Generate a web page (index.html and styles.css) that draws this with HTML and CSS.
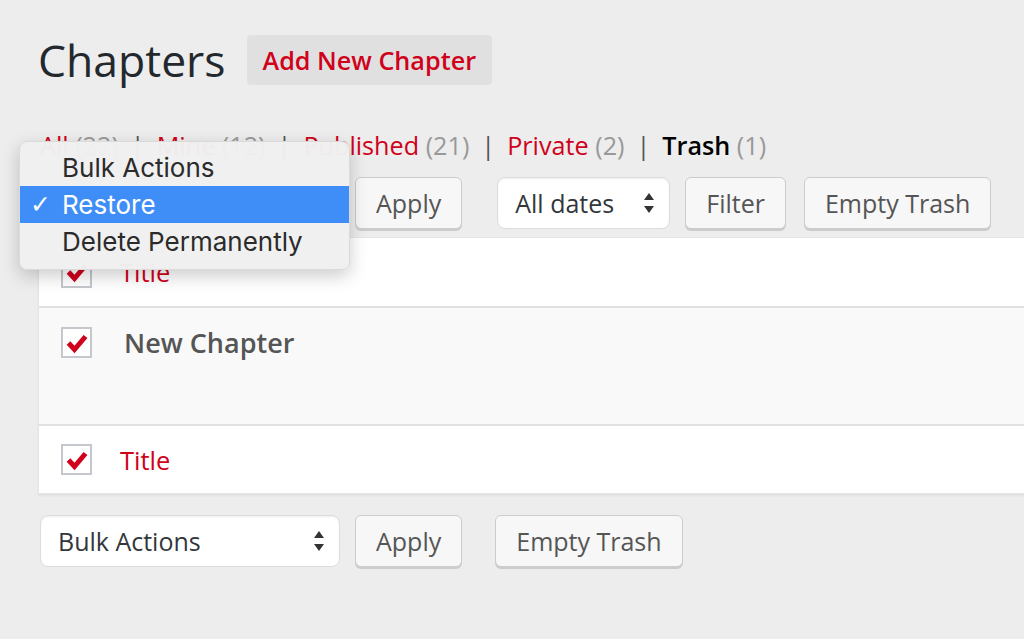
FILE: index.html
```html
<!DOCTYPE html>
<html lang="en">
<head>
  <meta charset="UTF-8" />
  <meta name="viewport" content="width=device-width, initial-scale=1.0"/>
  <title>Chapters</title>
  <link rel="stylesheet" href="styles.css">
</head>
<body>
  <div class="wrap">
    <!-- Page heading -->
    <div class="page-head">
      <h1 class="page-title">Chapters</h1>
      <a class="add-new">Add New Chapter</a>
    </div>

    <!-- Status filter links -->
    <ul class="subsubsub">
      <li><a>All <span class="count">(22)</span></a><span class="sep">|</span></li>
      <li><a>Mine <span class="count">(12)</span></a><span class="sep">|</span></li>
      <li><a>Published <span class="count">(21)</span></a><span class="sep">|</span></li>
      <li><a>Private <span class="count">(2)</span></a><span class="sep">|</span></li>
      <li><a class="current">Trash <span class="count">(1)</span></a></li>
    </ul>

    <div class="tablenav top">
      <div class="select wide">Bulk Actions <span class="arrows"><svg width="12" height="24" viewBox="0 0 12 24"><path d="M6 2 L11 9 L1 9 Z M6 22 L11 15 L1 15 Z" fill="#333"/></svg></span></div>
      <button class="btn">Apply</button>
      <div class="select dates">All dates <span class="arrows"><svg width="12" height="24" viewBox="0 0 12 24"><path d="M6 2 L11 9 L1 9 Z M6 22 L11 15 L1 15 Z" fill="#333"/></svg></span></div>
      <button class="btn">Filter</button>
      <button class="btn">Empty Trash</button>
    </div>

    <div class="list-table">
      <div class="row head">
        <span class="cb"><svg width="26" height="26" viewBox="0 0 26 26"><path d="M4.5 13 L10.5 19.5 L21.5 6.5" fill="none" stroke="#d0021b" stroke-width="5"/></svg></span>
        <a class="col-title">Title</a>
      </div>
      <div class="row item">
        <span class="cb"><svg width="26" height="26" viewBox="0 0 26 26"><path d="M4.5 13 L10.5 19.5 L21.5 6.5" fill="none" stroke="#d0021b" stroke-width="5"/></svg></span>
        <strong class="row-title">New Chapter</strong>
      </div>
      <div class="row foot">
        <span class="cb"><svg width="26" height="26" viewBox="0 0 26 26"><path d="M4.5 13 L10.5 19.5 L21.5 6.5" fill="none" stroke="#d0021b" stroke-width="5"/></svg></span>
        <a class="col-title">Title</a>
      </div>
    </div>

    <div class="tablenav bottom">
      <div class="select wide">Bulk Actions <span class="arrows"><svg width="12" height="24" viewBox="0 0 12 24"><path d="M6 2 L11 9 L1 9 Z M6 22 L11 15 L1 15 Z" fill="#333"/></svg></span></div>
      <button class="btn">Apply</button>
      <button class="btn trash">Empty Trash</button>
    </div>
  </div>

  <!-- Open bulk actions menu -->
  <ul class="menu">
    <li>Bulk Actions</li>
    <li class="selected"><span class="tick">✓</span>Restore</li>
    <li>Delete Permanently</li>
  </ul>
</body>
</html>
```

FILE: styles.css
```css
* {
  box-sizing: border-box;
}

html, body {
  overflow: hidden;
}

body {
  margin: 0;
  background: #ededed;
  font-family: 'Open Sans', sans-serif;
  color: #444;
  min-height: 100vh;
}

.wrap {
  padding: 35px 0 0 38px;
}

.page-head {
  display: flex;
  align-items: center;
  gap: 21px;
  height: 50px;
}

.page-title {
  margin: 0;
  font-size: 44.5px;
  font-weight: 400;
  line-height: 50px;
  color: #23282d;
}

.add-new {
  height: 50px;
  line-height: 50px;
  padding: 0 16px;
  background: #e0e0e0;
  border-radius: 4px;
  color: #d0021b;
  font-size: 25.2px;
  font-weight: 600;
}

.subsubsub {
  list-style: none;
  margin: 42px 0 0 2px;
  padding: 0;
  display: flex;
  font-size: 25.2px;
  line-height: 36px;
}

.subsubsub a {
  color: #d0021b;
}

.subsubsub a.current {
  color: #000;
  font-weight: 600;
}

.subsubsub .count {
  color: #999;
  font-weight: 400;
}

.subsubsub .sep {
  color: #555;
  margin: 0 12px;
}

.tablenav {
  display: flex;
  align-items: flex-start;
  gap: 15px;
}

.tablenav.top {
  margin-top: 14px;
  height: 60px;
}

.tablenav.bottom {
  margin-top: 21px;
}

.select {
  display: flex;
  align-items: center;
  justify-content: space-between;
  height: 52px;
  padding: 0 14px 0 17px;
  background: #fff;
  border: 1px solid #ddd;
  border-radius: 8px;
  box-shadow: inset 0 1px 2px rgba(0,0,0,0.07);
  font-size: 25px;
  color: #32373c;
}

.select.wide {
  width: 300px;
  margin-left: 2px;
}

.select.dates {
  width: 173px;
  margin-left: 20px;
}

.arrows {
  display: flex;
}

.btn {
  height: 52px;
  padding: 0 20px;
  background: #f7f7f7;
  border: 1px solid #ccc;
  border-radius: 6px;
  box-shadow: 0 2px 0 #ccc;
  font-family: 'Open Sans', sans-serif;
  font-size: 25px;
  color: #555;
}

.btn.trash {
  margin-left: 18px;
}

.tablenav.top .btn + .btn {
  margin-left: 3px;
}

.list-table {
  width: 1100px;
  background: #fff;
  border: 1px solid #e5e5e5;
  box-shadow: 0 2px 2px rgba(0,0,0,0.05);
}

.row {
  display: flex;
  align-items: center;
  padding-left: 22px;
}

.row.head {
  height: 70px;
  border-bottom: 2px solid #e1e1e1;
}

.row.item {
  height: 116px;
  align-items: flex-start;
  padding-top: 19px;
  background: #f9f9f9;
}

.row.foot {
  height: 69px;
  border-top: 2px solid #e1e1e1;
}

.cb {
  width: 31px;
  height: 31px;
  display: flex;
  align-items: center;
  justify-content: center;
  background: #fff;
  border: 2px solid #c4c8cc;
}

.col-title {
  margin-left: 28px;
  font-size: 25.5px;
  color: #d0021b;
}

.row-title {
  margin-left: 32px;
  font-size: 27px;
  font-weight: 600;
  color: #555;
  line-height: 31px;
}

.menu {
  position: absolute;
  left: 19px;
  top: 141px;
  width: 331px;
  margin: 0;
  padding: 7px 0 9px;
  list-style: none;
  background: rgba(240,240,240,0.98);
  border: 1px solid #dadada;
  border-radius: 8px;
  box-shadow: 0 6px 18px rgba(0,0,0,0.2);
  font-family: Inter, 'Liberation Sans', sans-serif;
  font-size: 26px;
  color: #2b2b2b;
}

.menu li {
  height: 37px;
  line-height: 37px;
  padding-left: 42px;
  position: relative;
}

.menu li.selected {
  background: #3f8ef7;
  color: #fff;
}

.menu .tick {
  position: absolute;
  left: 10px;
  font-family: 'DejaVu Sans', sans-serif;
  font-weight: bold;
  font-size: 25px;
}
```
